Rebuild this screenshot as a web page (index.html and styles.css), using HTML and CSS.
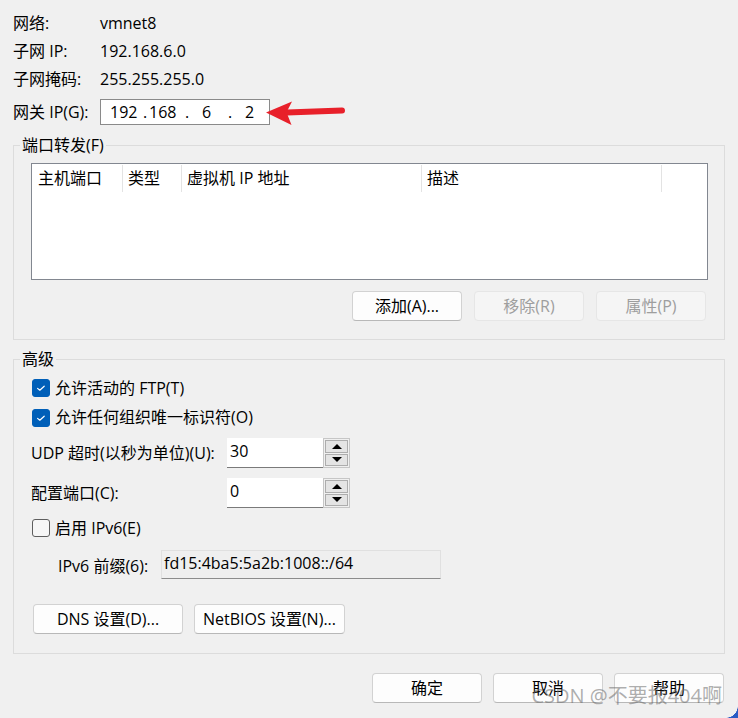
FILE: index.html
```html
<!DOCTYPE html>
<html lang="zh-CN">
<head>
<meta charset="utf-8">
<title>NAT 设置</title>
<link rel="stylesheet" href="styles.css">
</head>
<body>
<div class="dialog">
  <div class="info">
    <div class="row"><span class="lbl">网络:</span><span>vmnet8</span></div>
    <div class="row"><span class="lbl">子网 IP:</span><span>192.168.6.0</span></div>
    <div class="row"><span class="lbl">子网掩码:</span><span>255.255.255.0</span></div>
    <div class="row gw-row"><span class="lbl">网关 IP(G):</span>
      <div class="ipbox"><span>192</span><span>.</span><span>168</span><span>.</span><span>6</span><span>.</span><span>2</span></div>
    </div>
    <svg class="arrow" width="88" height="32" viewBox="0 0 88 32">
      <path d="M4 16.6 L30 5.6 L24.5 16.2 L29.5 29 Z" fill="#e8202a"/>
      <line x1="25" y1="16.4" x2="80" y2="14.6" stroke="#e8202a" stroke-width="6" stroke-linecap="round"/>
    </svg>
  </div>

  <fieldset class="group pf">
    <legend>端口转发(F)</legend>
    <div class="table">
      <div class="thead">
        <div class="th first">主机端口</div>
        <div class="th">类型</div>
        <div class="th">虚拟机 IP 地址</div>
        <div class="th">描述</div>
        <div class="th last"></div>
      </div>
    </div>
    <div class="btnrow">
      <button class="btn">添加(A)...</button>
      <button class="btn" disabled>移除(R)</button>
      <button class="btn" disabled>属性(P)</button>
    </div>
  </fieldset>

  <fieldset class="group adv">
    <legend>高级</legend>
    <div class="cb-row first-cb"><span class="cb checked"><svg width="18" height="18" viewBox="0 0 18 18"><path d="M5.6 9.4 L7.8 11.2 L12.2 7.2" fill="none" stroke="#fff" stroke-width="1.2" stroke-linecap="round" stroke-linejoin="round"/></svg></span><span>允许活动的 FTP(T)</span></div>
    <div class="cb-row"><span class="cb checked"><svg width="18" height="18" viewBox="0 0 18 18"><path d="M5.6 9.4 L7.8 11.2 L12.2 7.2" fill="none" stroke="#fff" stroke-width="1.2" stroke-linecap="round" stroke-linejoin="round"/></svg></span><span>允许任何组织唯一标识符(O)</span></div>
    <div class="field-row udp">
      <span>UDP 超时(以秒为单位)(U):</span>
      <div class="spin"><div class="field">30</div><div class="btns"><div class="sb up"></div><div class="sb down"></div></div></div>
    </div>
    <div class="field-row port">
      <span>配置端口(C):</span>
      <div class="spin"><div class="field">0</div><div class="btns"><div class="sb up"></div><div class="sb down"></div></div></div>
    </div>
    <div class="cb-row ipv6"><span class="cb"></span><span>启用 IPv6(E)</span></div>
    <div class="prefix-row">
      <span>IPv6 前缀(6):</span>
      <div class="prefix">fd15:4ba5:5a2b:1008::/64</div>
    </div>
    <div class="dns-row">
      <button class="btn dns">DNS 设置(D)...</button>
      <button class="btn netbios">NetBIOS 设置(N)...</button>
    </div>
  </fieldset>

  <div class="footer">
    <button class="btn">确定</button>
    <button class="btn">取消</button>
    <button class="btn">帮助</button>
  </div>

  <div class="watermark">CSDN @不要报404啊</div>
  <div class="corner"></div>
</div>
</body>
</html>
```

FILE: styles.css
```css
* { box-sizing: border-box; }

body {
  margin: 0;
  background: #f0f0f0;
  font-family: "Open Sans", "Noto Sans CJK SC", sans-serif;
  font-size: 16px;
  color: #000;
}

.dialog {
  position: relative;
  width: 738px;
  height: 718px;
  overflow: hidden;
}

.info {
  position: relative;
  padding: 9px 0 0 13px;
}

.row {
  display: grid;
  grid-template-columns: 87px auto;
  align-items: center;
  height: 28px;
  line-height: 28px;
}

.gw-row {
  margin-top: 5px;
  height: 26px;
}

.ipbox {
  width: 170px;
  height: 26px;
  border: 1px solid #8a8a8a;
  background: #fff;
  display: grid;
  grid-template-columns: 33px 6px 36px 17px 26px 17px auto;
  padding-left: 9px;
  line-height: 24px;
}

.arrow {
  position: absolute;
  left: 262px;
  top: 96px;
}

.group {
  margin: 0 13px;
  border: 1px solid #dcdcdc;
  min-width: 0;
}

.group legend {
  margin-left: -11px;
  padding: 0 2px;
  line-height: 20px;
  font-size: 16px;
}

.pf {
  margin-top: 11px;
  padding: 8px 16px 18px 17px;
}

.table {
  height: 117px;
  border: 1px solid #828790;
  background: #fff;
}

.thead {
  display: grid;
  grid-template-columns: 91px 59px 240px 240px 1fr;
  height: 27px;
}

.th {
  margin: 1px 0;
  padding-left: 5px;
  line-height: 27px;
  border-right: 1px solid #e3e3e3;
}

.th.first { padding-left: 6px; }
.th.last { border-right: 0; }

.btnrow {
  display: flex;
  justify-content: flex-end;
  gap: 12px;
  margin: 11px 2px 0 0;
}

.btn {
  width: 110px;
  height: 30px;
  padding: 0;
  background: #fdfdfd;
  border: 1px solid #d2d2d2;
  border-bottom-color: #b8b8b8;
  border-radius: 4px;
  font-family: inherit;
  font-size: 16px;
  color: #000;
  line-height: 27px;
}

.btn:disabled {
  background: #f5f5f5;
  border-color: #e6e6e6;
  color: #9e9e9e;
}

.adv {
  margin-top: 9px;
  padding: 4px 16px 19px 17px;
}

.cb-row {
  display: flex;
  align-items: center;
  gap: 5px;
  height: 29px;
  line-height: 29px;
  padding-left: 1px;
}

.first-cb { height: 30px; }

.cb {
  width: 18px;
  height: 18px;
  border-radius: 3px;
  border: 1px solid #5e5e5e;
  background: #f6f6f6;
  display: block;
}

.cb svg { display: block; margin: -1px; }

.cb.checked {
  background: #005fb8;
  border-color: #005fb8;
}

.field-row {
  display: grid;
  grid-template-columns: 196px auto;
  align-items: center;
  height: 30px;
  line-height: 30px;
}

.udp { margin-top: 6px; }
.port { margin-top: 10px; }

.spin {
  display: flex;
  width: 123px;
  height: 30px;
}

.spin .field {
  width: 96px;
  background: #fff;
  border-bottom: 1px solid #7a7a7a;
  padding-left: 3px;
  line-height: 27px;
}

.spin .btns {
  width: 27px;
  display: flex;
  flex-direction: column;
  gap: 1px;
  padding: 1px;
  border: 1px solid #c6c6c6;
}

.sb {
  flex: 1;
  background: #e4e4e4;
  border: 1px solid #adadad;
  display: flex;
  align-items: center;
  justify-content: center;
}

.sb::before {
  content: "";
  width: 0;
  height: 0;
  border-left: 5px solid transparent;
  border-right: 5px solid transparent;
}

.sb.up::before { border-bottom: 5px solid #000; }
.sb.down::before { border-top: 5px solid #000; }

.ipv6 {
  margin-top: 5px;
  height: 30px;
}

.prefix-row {
  display: grid;
  grid-template-columns: 103px 280px;
  align-items: center;
  margin: 7px 0 0 27px;
  height: 29px;
}

.prefix {
  height: 29px;
  background: #efefef;
  border: 1px solid #e0e0e0;
  border-bottom-color: #8c8c8c;
  padding-left: 2px;
  line-height: 25px;
}

.dns-row {
  display: flex;
  gap: 11px;
  margin: 25px 0 0 2px;
}

.btn.dns { width: 150px; }
.btn.netbios { width: 151px; }

.footer {
  display: flex;
  justify-content: flex-end;
  gap: 11px;
  margin-top: 19px;
  padding-right: 14px;
}

.watermark {
  position: absolute;
  right: 16px;
  top: 684px;
  font-size: 20px;
  line-height: 24px;
  color: rgba(105, 105, 105, 0.55);
  white-space: nowrap;
}

.corner {
  position: absolute;
  right: 0;
  bottom: 0;
  width: 12px;
  height: 12px;
  background: radial-gradient(circle at 0 0, #f0f0f0 11.5px, #2a5cc4 12px);
}
```
